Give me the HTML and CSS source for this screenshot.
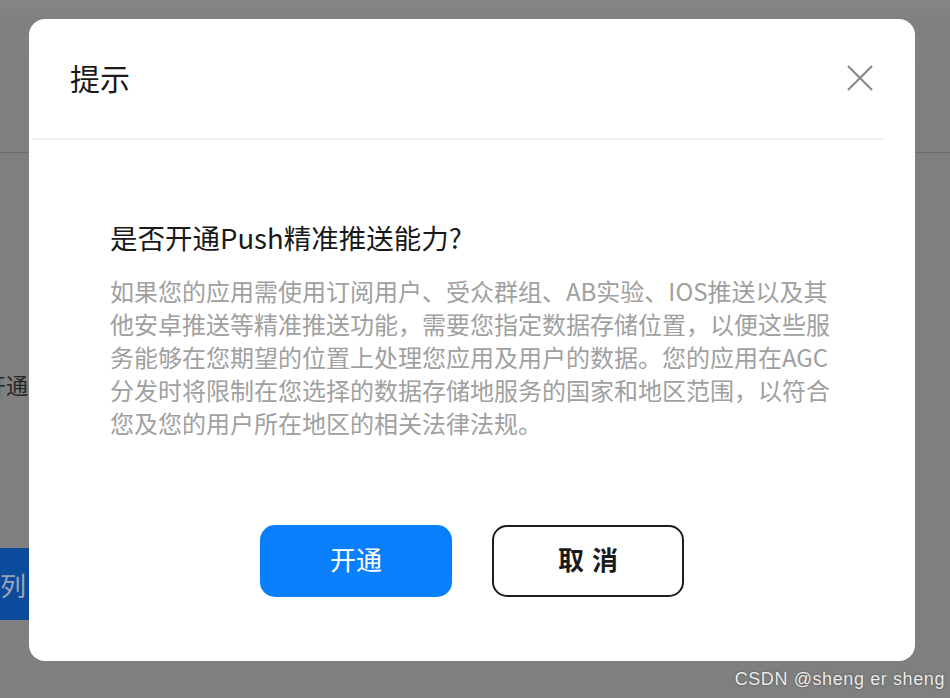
FILE: index.html
```html
<!DOCTYPE html>
<html lang="zh-CN">
<head>
<meta charset="utf-8">
<title>提示</title>
<link rel="stylesheet" href="styles.css">
</head>
<body>
<div class="page">
  <header class="page-header"></header>
  <main class="page-main">
    <div class="bg-text">开通</div>
    <div class="bg-btn">序列</div>
  </main>
</div>

<div class="modal">
  <div class="modal-header">
    <h2 class="modal-title">提示</h2>
    <button class="close" aria-label="关闭">
      <svg width="26" height="26" viewBox="0 0 26 26"><path d="M1 1 L25 25 M25 1 L1 25" stroke="#8a8a8a" stroke-width="2.2" fill="none"/></svg>
    </button>
  </div>
  <div class="divider"></div>
  <div class="modal-body">
    <h3 class="question">是否开通Push精准推送能力?</h3>
    <p class="desc">如果您的应用需使用订阅用户、受众群组、AB实验、IOS推送以及其<br>他安卓推送等精准推送功能，需要您指定数据存储位置，以便这些服<br>务能够在您期望的位置上处理您应用及用户的数据。您的应用在AGC<br>分发时将限制在您选择的数据存储地服务的国家和地区范围，以符合<br>您及您的用户所在地区的相关法律法规。</p>
  </div>
  <div class="actions">
    <button class="btn btn-primary">开通</button>
    <button class="btn btn-outline">取消</button>
  </div>
</div>

<div class="watermark">CSDN @sheng er sheng</div>
</body>
</html>
```

FILE: styles.css
```css
* { box-sizing: border-box; }

html, body {
  margin: 0;
  padding: 0;
}

body {
  width: 950px;
  height: 698px;
  overflow: hidden;
  background: #7f7f7f;
  font-family: "Noto Sans CJK SC", "Noto Sans", sans-serif;
  position: relative;
}

/* underlying (dimmed) page */
.page {
  display: flex;
  flex-direction: column;
}

.page-header {
  height: 153px;
  border-bottom: 1px solid #6c6c6c;
  background: linear-gradient(#858585 0, #808080 22px, #7f7f7f 100%);
}

.page-main {
  display: flex;
  flex-direction: column;
  align-items: flex-start;
}

.bg-text {
  margin-top: 216px;
  margin-left: -16px;
  font-size: 22px;
  line-height: 30px;
  color: #262626;
}

.bg-btn {
  margin-top: 149px;
  margin-left: -102px;
  width: 131px;
  height: 72px;
  background: #0c4b9c;
  color: #9aa6b8;
  font-size: 26px;
  display: flex;
  align-items: center;
  justify-content: flex-end;
  padding-right: 3px;
}

/* modal */
.modal {
  position: absolute;
  left: 29px;
  top: 19px;
  width: 886px;
  height: 642px;
  background: #fff;
  border-radius: 16px;
  display: flex;
  flex-direction: column;
}

.modal-header {
  height: 119px;
  display: flex;
  align-items: center;
  justify-content: space-between;
  padding: 0 42px 4px 41px;
}

.modal-title {
  margin: 0;
  font-size: 30px;
  font-weight: 400;
  color: #1a1a1a;
  line-height: 40px;
}

.close {
  border: 0;
  background: none;
  padding: 0;
  width: 26px;
  height: 26px;
  display: flex;
  margin-top: 2px;
}

.divider {
  height: 2px;
  background: #f1f1f1;
  margin: 0 31px 0 3px;
}

.modal-body {
  padding: 79px 81px 0 81px;
}

.question {
  margin: 0;
  font-size: 27.5px;
  font-weight: 400;
  line-height: 36px;
  color: #191919;
}

.desc {
  margin: 19px 0 0 0;
  font-size: 24px;
  letter-spacing: 0;
  line-height: 33px;
  color: #a0a0a0;
  white-space: nowrap;
}

.actions {
  margin-top: 86px;
  display: flex;
  justify-content: center;
  gap: 40px;
}

.btn {
  width: 192px;
  height: 72px;
  font-family: "Noto Sans CJK SC", sans-serif;
  font-size: 26px;
  border-radius: 15px;
  display: flex;
  align-items: center;
  justify-content: center;
  padding: 0 0 5px 0;
}

.btn-primary {
  background: #0a7ffc;
  color: #fff;
  border: 0;
  font-weight: 400;
}

.btn-outline {
  background: #fff;
  color: #1a1a1a;
  border: 2px solid #1e1e1e;
  font-weight: 700;
  letter-spacing: 8px;
  text-indent: 8px;
}

.watermark {
  position: absolute;
  right: 5px;
  bottom: 8px;
  font-family: "Liberation Sans", Arial, sans-serif;
  font-size: 18px;
  letter-spacing: 0.6px;
  color: #ececec;
  text-shadow: 0 0 2px rgba(0,0,0,0.5);
}
```
